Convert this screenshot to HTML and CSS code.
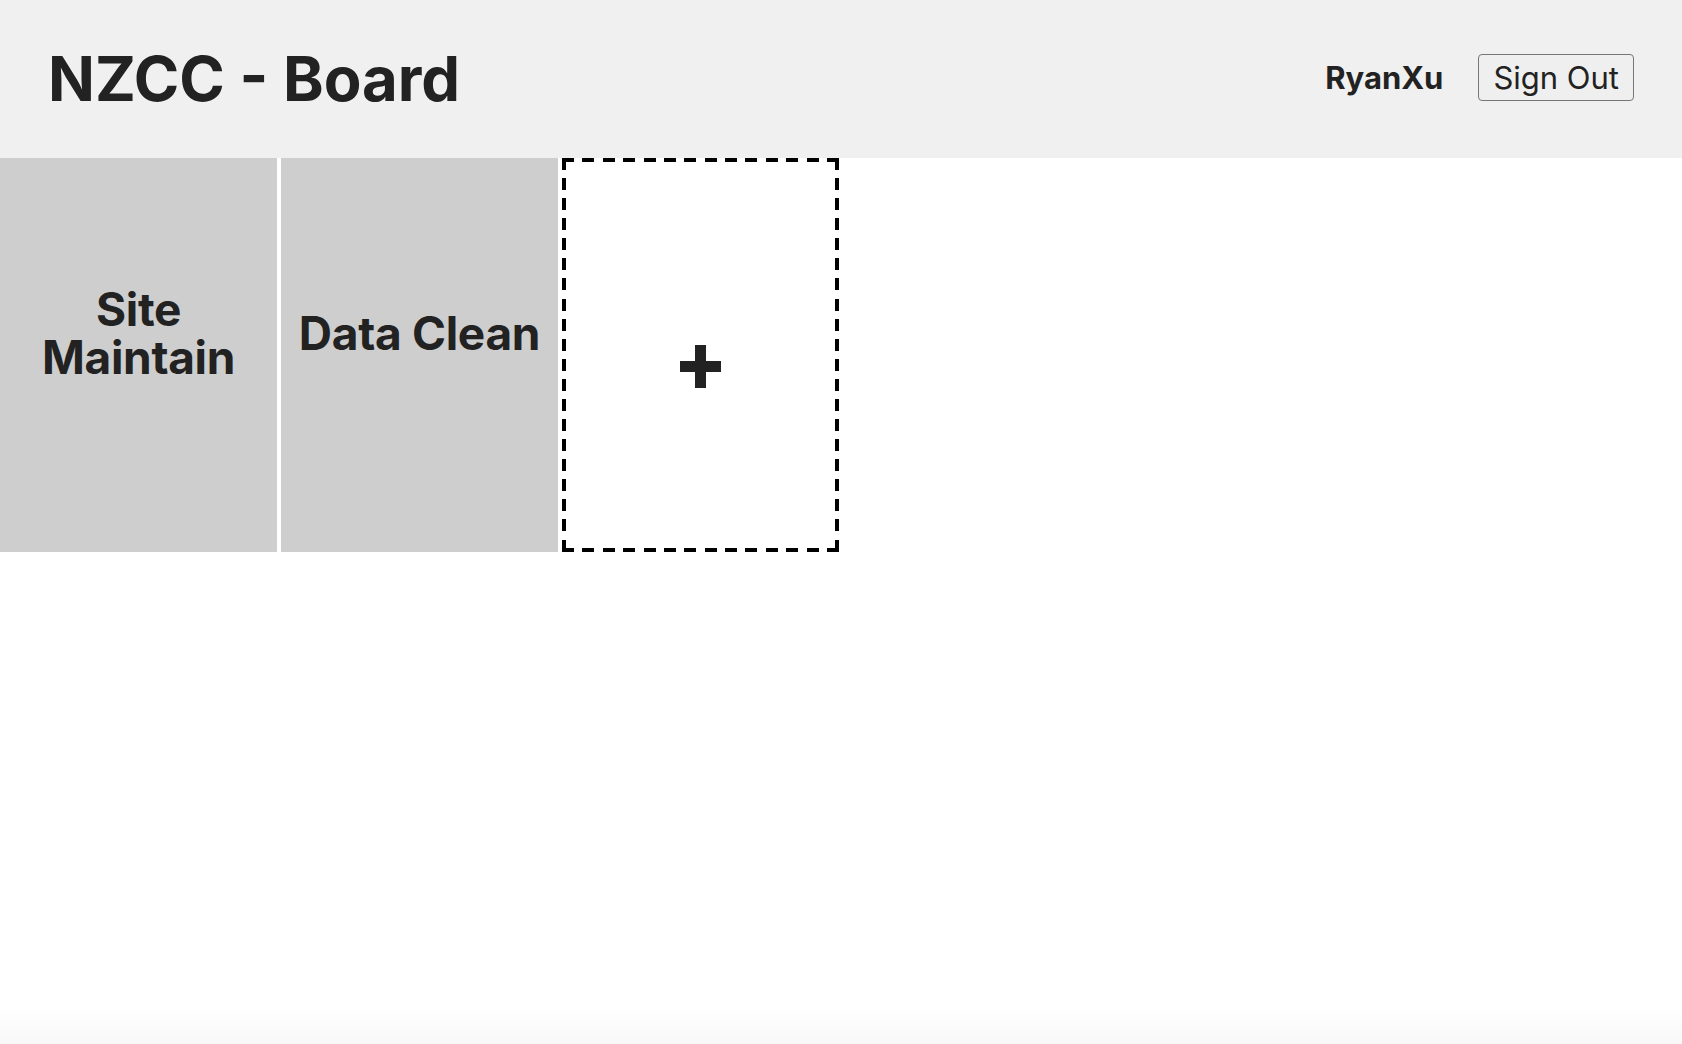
FILE: index.html
```html
<!DOCTYPE html>
<html lang="en">
<head>
<meta charset="utf-8">
<title>NZCC - Board</title>
<link rel="stylesheet" href="styles.css">
</head>
<body>
<header class="topbar">
  <h1 class="title">NZCC - Board</h1>
  <div class="user">
    <span class="user-name">RyanXu</span>
    <button class="signout" type="button">Sign Out</button>
  </div>
</header>
<main class="boards">
  <div class="board"><h2 class="board-name"><span class="line">Site</span><span class="line">Maintain</span></h2></div>
  <div class="board"><h2 class="board-name"><span class="line">Data Clean</span></h2></div>
  <div class="board board-add">
    <svg class="plus" width="41" height="43" viewBox="0 0 41 43" aria-hidden="true">
      <rect x="15" y="0" width="11" height="43" fill="#222"/>
      <rect x="0" y="16" width="41" height="11" fill="#222"/>
    </svg>
  </div>
</main>
</body>
</html>
```

FILE: styles.css
```css
* { box-sizing: border-box; }

html, body {
  margin: 0;
  padding: 0;
}

body {
  min-height: 100vh;
  font-family: Inter, "Liberation Sans", sans-serif;
  color: #222;
  background: linear-gradient(to bottom, #ffffff calc(100% - 36px), #f8f8f8 100%);
}

.topbar {
  height: 158px;
  background: #f0f0f0;
  display: flex;
  align-items: center;
  justify-content: space-between;
  padding: 0 48px 0 48px;
}

.title {
  margin: 0;
  font-size: 61.6px;
  font-weight: 700;
  line-height: 1.1;
}

.user {
  display: flex;
  align-items: center;
  gap: 35px;
  margin-bottom: 3px;
}

.user-name {
  font-size: 31px;
  font-weight: 700;
}

.signout {
  height: 47px;
  padding: 0 14px;
  font-family: Inter, "Liberation Sans", sans-serif;
  font-size: 31px;
  font-weight: 400;
  color: #222;
  background: #efefef;
  border: 1.5px solid #767676;
  border-radius: 4px;
  line-height: 1;
}

.boards {
  display: flex;
  gap: 4px;
}

.board {
  flex: 0 0 277px;
  height: 393.5px;
  background: #cecece;
  display: flex;
  align-items: center;
  justify-content: center;
  text-align: center;
  padding-bottom: 43px;
}

.board-name {
  margin: 0;
  font-size: 46px;
  font-weight: 700;
  letter-spacing: -0.3px;
  display: flex;
  flex-direction: column;
  align-items: center;
}

.line {
  display: block;
  height: 48px;
  line-height: 48px;
}

.board-add {
  padding-bottom: 0;
  padding-top: 24px;
  background:
    repeating-linear-gradient(90deg, #000 0 12px, transparent 12px 20.38px) left top / 100% 4px no-repeat,
    repeating-linear-gradient(90deg, #000 0 12px, transparent 12px 20.38px) left bottom / 100% 4px no-repeat,
    repeating-linear-gradient(180deg, #000 0 12px, transparent 12px 20.08px) left top / 4px 100% no-repeat,
    repeating-linear-gradient(180deg, #000 0 12px, transparent 12px 20.08px) right top / 4px 100% no-repeat,
    #fff;
}

.plus { display: block; }
```
